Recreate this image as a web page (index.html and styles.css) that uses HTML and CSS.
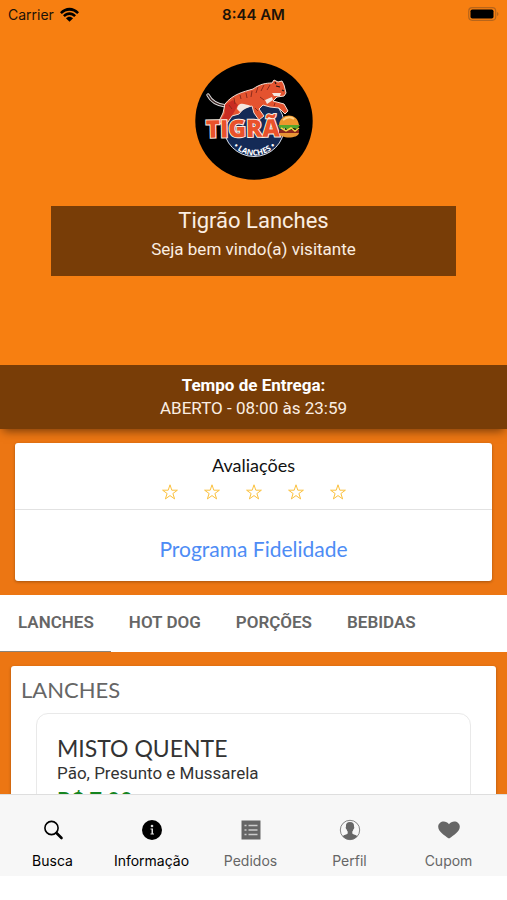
FILE: index.html
```
<!DOCTYPE html>
<html lang="pt-BR">
<head>
    <meta charset="UTF-8">
    <meta name="viewport" content="width=device-width, initial-scale=1.0">
    <title>Tigrão Lanches</title>
    <link rel="stylesheet" href="styles.css">
</head>
<body>
    <div class="app">
        <main class="content">
            <header class="hero">
                <div class="status-bar">
                    <span class="carrier">Carrier
                        <svg class="wifi" width="19" height="15" viewBox="0 0 19 15"><path d="M0 5.2C5.2-.8 13.8-.8 19 5.2l-1.8 1.9C13 2.500 6 2.500 1.800 7.100z"/><path d="M3 8.200c3.600-4 9.400-4 13 0L14.200 10C11.500 7.200 7.500 7.200 4.800 10z"/><path d="M5.900 11.200c2-2.100 5.200-2.100 7.200 0L9.500 14.800z"/></svg>
                    </span>
                    <span class="clock">8:44 AM</span>
                    <span class="battery">
                        <svg width="31" height="14" viewBox="0 0 31 14"><rect x=".7" y=".7" width="27" height="12.600" rx="3.500" fill="none" stroke="#b8651a" stroke-width="1.200"/><rect x="2.500" y="2.500" width="23" height="9" rx="1.800"/><path d="M29 5v4c2-.7 2-3.300 0-4z" fill="#b8651a"/></svg>
                    </span>
                </div>

                <svg class="logo" viewBox="0 0 118 118" role="img" aria-label="Tigrão Lanches">
                    <defs><path id="badge-arc" d="M32 79Q59 108 87 79"/></defs>
                    <circle cx="59" cy="59" r="58.700"/>
                    <circle cx="59" cy="64" r="30.500" fill="#142a56" stroke="#dce3ee" stroke-width="1"/>
                    <!-- tiger -->
                    <path d="M31 44C21 43 16 39 13 33" fill="none" stroke="#ddd" stroke-width="3.400" stroke-linecap="round"/>
                    <path d="M31 44C21 43 16 39 13 33" fill="none" stroke="#3a2320" stroke-width="1.600" stroke-linecap="round"/>
                    <path d="M30 42C38 32 48 30 58 27C65 22 71 21 77 21L79 18L83 20L87 19L89 23L91 31L89 34L82 35L78 39L89 42L93 49L90 52L84 46L75 45L68 43L64 47L69 54L64 58L59 51L57 44L49 46L44 52L37 54L31 63L23 61L28 51Z" fill="#e4532f" stroke="#f4dfd4" stroke-width="1" stroke-linejoin="round"/>
                    <path d="M30 43L38 38L43 43L38 52L31 61L25 60L30 51Z" fill="#c92c22"/>
                    <path d="M42 47C43 40 48 41 56 44L50 47L45 50Z M77 31L86 31L85 34L79 34Z M70 38L77 35L78 38L72 42Z" fill="#f5e7df"/>
                    <path d="M39 36l1 6M45 33l1 4M51 31l1 5M57 29l-1 6M63 25l-2 6M69 23l-3 6M75 23l-3 5M34 43l3 4M65 35l4 3M60 46l3 3M80 41l-1 3" stroke="#8c2b1b" stroke-width="1"/>
                    <path d="M81 24l4 1M87 28l2 1M80 20l1 2" stroke="#1c1714" stroke-width="1.200"/>
                    <g transform="rotate(-1 48 76)">
                        <text class="logo-name" x="48" y="75" text-anchor="middle">TIGRÃ</text>
                    </g>
                    <text class="logo-sub"><textPath href="#badge-arc" startOffset="50%" text-anchor="middle">• LANCHES •</textPath></text>
                    <!-- burger takes the place of the last letter -->
                    <path d="M84 63C85 51 102 50 104 63Z" fill="#ee972d"/>
                    <path d="M83 63h22l-3 4-4-1-4 3-4-3-5 1z" fill="#55a62e"/>
                    <path d="M84 68h20v3H84z" fill="#8d281c"/>
                    <path d="M86 66l5 3 5-3 4 3 4-3" fill="none" stroke="#fad34a" stroke-width="1.500"/>
                    <path d="M84 71h20c-1 6-19 6-20 0z" fill="#e99535"/>
                    <path d="M88 58q6-5 11-1" stroke="#ffd083" stroke-width="2" fill="none"/>
                </svg>

                <div class="welcome">
                    <h1>Tigrão Lanches</h1>
                    <p>Seja bem vindo(a) visitante</p>
                </div>

                <div class="delivery">
                    <strong>Tempo de Entrega:</strong>
                    <span>ABERTO - 08:00 às 23:59</span>
                </div>
            </header>

            <section class="card info-card">
                <div class="rating">
                    <h2>Avaliações</h2>
                    <div class="stars" role="img" aria-label="Avaliações">
                        <svg viewBox="0 0 18 18"><path d="M9 1.800l1.800 5.400h5.600l-4.500 3.300 1.700 5.400L9 12.600l-4.600 3.300 1.700-5.400-4.500-3.300h5.600z"/></svg>
                        <svg viewBox="0 0 18 18"><path d="M9 1.800l1.800 5.400h5.600l-4.500 3.300 1.700 5.400L9 12.600l-4.600 3.300 1.700-5.400-4.500-3.300h5.600z"/></svg>
                        <svg viewBox="0 0 18 18"><path d="M9 1.800l1.800 5.400h5.600l-4.500 3.300 1.700 5.400L9 12.600l-4.600 3.300 1.700-5.400-4.500-3.300h5.600z"/></svg>
                        <svg viewBox="0 0 18 18"><path d="M9 1.800l1.800 5.400h5.600l-4.500 3.300 1.700 5.400L9 12.600l-4.600 3.300 1.700-5.400-4.500-3.300h5.600z"/></svg>
                        <svg viewBox="0 0 18 18"><path d="M9 1.800l1.800 5.400h5.600l-4.500 3.300 1.700 5.400L9 12.600l-4.600 3.300 1.700-5.400-4.500-3.300h5.600z"/></svg>
                    </div>
                </div>
                <a class="loyalty" href="#">Programa Fidelidade</a>
            </section>

            <nav class="categories">
                <button class="category active">LANCHES</button>
                <button class="category">HOT DOG</button>
                <button class="category">PORÇÕES</button>
                <button class="category">BEBIDAS</button>
            </nav>

            <section class="card menu-card">
                <h2>LANCHES</h2>
                <article class="product">
                    <h3>MISTO QUENTE</h3>
                    <p>Pão, Presunto e Mussarela</p>
                    <p class="price">R$ 7,00</p>
                </article>
            </section>
        </main>

        <nav class="tab-bar">
            <button class="tab active">
                <svg viewBox="0 0 24 24"><circle cx="10.500" cy="10" r="6.600" fill="none" stroke="currentColor" stroke-width="1.600"/><path d="M15.500 15l5 5" stroke="currentColor" stroke-width="2.600" stroke-linecap="round"/></svg>
                Busca
            </button>
            <button class="tab active">
                <svg viewBox="0 0 24 24"><circle cx="12" cy="12" r="10" fill="currentColor"/><circle cx="12" cy="8" r="1.300" fill="#ddd"/><path d="M10.500 10.500H13v5h1v1h-3.500v-1h1v-4h-1z" fill="#ddd"/></svg>
                Informação
            </button>
            <button class="tab">
                <svg viewBox="0 0 24 24"><path d="M2.500 2.500h19v19h-19z" fill="currentColor"/><path d="M5.500 7.500h2M9.500 7.500h9M5.500 12h2M9.500 12h9M5.500 16.500h2M9.500 16.500h9" stroke="#ccc" stroke-width="1.400"/></svg>
                Pedidos
            </button>
            <button class="tab">
                <svg viewBox="0 0 24 24"><circle cx="12" cy="12" r="9.700" fill="none" stroke="currentColor" stroke-width=".8"/><path d="M12 4c-3 0-4.400 1.900-4 4.500-.7.700 0 2.700.7 3 .2 1 .5 1.500 1 2v2c-1 1.300-3.700 1.100-5 2.700A9.700 9.700 0 0 0 12 21.700a9.700 9.700 0 0 0 7.300-3.500c-1.300-1.600-4-1.400-5-2.700v-2c.5-.5.800-1 1-2 .700-.3 1.400-2.300.7-3C16.400 5.900 15 4 12 4z" fill="currentColor"/></svg>
                Perfil
            </button>
            <button class="tab">
                <svg viewBox="0 0 24 24"><path d="M12 20.500C7.500 17.500 1.200 13.500 1.200 8.700c0-5.600 7.500-7.200 10.800-2.500 3.300-4.700 10.800-3.100 10.800 2.500 0 4.800-6.300 8.800-10.800 11.800z" fill="currentColor"/></svg>
                Cupom
            </button>
        </nav>
    </div>
</body>
</html>
```
FILE: styles.css
```
:root {
    --orange: #f77f11;
    --orange-dark: #ec7613;
    --brown: #783d07;
    --grey: #666;
}
* { box-sizing: border-box; }
body { margin: 0; background: #fff; color: #111; font-family: Roboto, sans-serif; }
h1, h2, h3, p { margin: 0; font-weight: 400; }
button { border: none; background: none; padding: 0; margin: 0; cursor: pointer; }
.app { display: flex; flex-direction: column; height: 100vh; padding-bottom: 24px; }
.content { flex: 1; min-height: 0; overflow: hidden; background: var(--orange-dark); }

.hero { display: flex; flex-direction: column; align-items: center; background: var(--orange); box-shadow: 0 5px 9px -3px rgba(0, 0, 0, 0.5); }
.status-bar { display: grid; grid-template-columns: 1fr auto 1fr; align-items: center; width: 100%; height: 28px; padding: 0 8px; font-family: Inter, sans-serif; font-size: 14px; color: #1c1208; }
.carrier { display: flex; align-items: center; gap: 6px; }
.clock { font-size: 15px; font-weight: 600; }
.battery { display: flex; justify-content: flex-end; }
.logo { width: 118px; height: 118px; margin-top: 34px; }
.logo-name { font: 800 24px "Open Sans", sans-serif; fill: #e9522b; stroke: #fff0e4; stroke-width: 2px; paint-order: stroke; }
.logo-sub { font: 700 8px "Open Sans", sans-serif; fill: #fff; }
.welcome { width: 80%; height: 70px; margin-top: 26px; background: var(--brown); color: #fbeee2; text-align: center; }
.welcome h1 { font-size: 22px; line-height: 30px; }
.welcome p { font-size: 17px; line-height: 26px; }
.delivery { display: flex; flex-direction: column; width: 100%; margin-top: 89px; padding: 9px 0; background: var(--brown); color: #fbeee2; font-size: 17px; line-height: 23px; text-align: center; }
.delivery strong { color: #fff; font-weight: 700; }

.card { background: #fff; border-radius: 3px; box-shadow: 0 1px 3px rgba(0, 0, 0, 0.3); }
.info-card { margin: 14px 15px; text-align: center; }
.rating { padding: 10px 0 8px; border-bottom: 1px solid #e2e2e2; }
.rating h2 { font-family: Lato, sans-serif; font-size: 18px; line-height: 24px; }
.stars { display: flex; justify-content: center; gap: 24px; padding: 6px 0 0; }
.stars svg { width: 18px; height: 18px; fill: none; stroke: #fbc13e; stroke-width: 1; }
.loyalty { display: block; padding: 27px 0 20px; color: #4d8cf5; font-family: Lato, sans-serif; font-size: 21px; line-height: 24px; text-decoration: none; }

.categories { display: flex; height: 57px; background: #fff; }
.category { padding: 0 17px 2px 18px; border-bottom: 1px solid transparent; color: var(--grey); font-family: Roboto, sans-serif; font-size: 17px; font-weight: 600; }
.category.active { border-bottom-color: #8b8378; }

.menu-card { margin: 14px 11px; padding: 10px 25px 20px 10px; }
.menu-card h2 { color: var(--grey); font-family: Lato, sans-serif; font-size: 22px; line-height: 28px; }
.product { margin: 9px 0 0 15px; padding: 20px; border: 1px solid #e9e9e9; border-radius: 12px; color: #333; }
.product h3 { font-family: Lato, sans-serif; font-size: 23px; line-height: 28px; }
.product p { font-size: 17px; line-height: 22px; }
.product .price { margin-top: 3px; color: #15851f; font-family: Lato, sans-serif; font-size: 22px; font-weight: 700; line-height: 28px; }

.tab-bar { display: flex; height: 82px; padding: 0 9px 0 3px; border-top: 1px solid #dedede; background: #f7f7f7; }
.tab { display: flex; flex: 1 1 0; min-width: 0; flex-direction: column; align-items: center; padding-top: 23px; gap: 9px; color: var(--grey); font-family: Inter, sans-serif; font-size: 14px; line-height: 20px; }
.tab.active { color: #000; }
.tab svg { width: 24px; height: 24px; }
```
